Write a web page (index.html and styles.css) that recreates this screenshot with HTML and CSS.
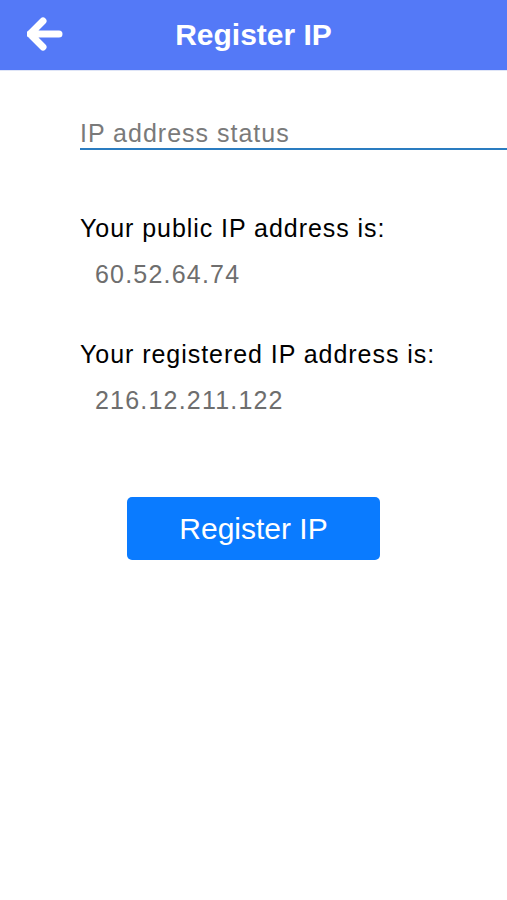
FILE: index.html
```html
<!DOCTYPE html>
<html>
<head>
<meta charset="utf-8">
<link rel="stylesheet" href="styles.css">
</head>
<body>
<header class="topbar">
  <button class="back" aria-label="Back">
    <svg width="36" height="34" viewBox="0 0 36 34"><path d="M16 4 L3 17 L16 30 M3 17 H32" fill="none" stroke="#fff" stroke-width="7" stroke-linecap="round" stroke-linejoin="round"/></svg>
  </button>
  <h1 class="title">Register IP</h1>
</header>
<main class="content">
  <div class="field">IP address status</div>
  <p class="label first">Your public IP address is:</p>
  <p class="value">60.52.64.74</p>
  <p class="label second">Your registered IP address is:</p>
  <p class="value">216.12.211.122</p>
  <div class="actions">
    <button class="register">Register IP</button>
  </div>
</main>
</body>
</html>
```
FILE: styles.css
```css
html, body {
  margin: 0;
  padding: 0;
  background: #fff;
  font-family: "Liberation Sans", Arial, sans-serif;
}
.topbar {
  position: relative;
  height: 70px;
  background: #5479f7;
  border-bottom: 1px solid #dfe5f7;
  display: flex;
  align-items: center;
  justify-content: center;
}
.back {
  position: absolute;
  left: 27px;
  top: 17px;
  width: 36px;
  height: 34px;
  padding: 0;
  border: 0;
  background: none;
  display: flex;
}
.title {
  margin: 0;
  color: #fff;
  font-size: 30px;
  font-weight: bold;
  line-height: 36px;
}
.content {
  display: flex;
  flex-direction: column;
}
.field {
  margin: 47px 0 0 80px;
  font-size: 25px;
  letter-spacing: 1px;
  line-height: 30px;
  color: #7a7a7a;
  border-bottom: 2px solid #2a7cc0;
}
.label {
  margin: 0 0 0 80px;
  font-size: 25px;
  letter-spacing: 0.95px;
  line-height: 30px;
  color: #000;
}
.label.first { margin-top: 63px; }
.label.second { margin-top: 50px; }
.value {
  margin: 16px 0 0 95px;
  font-size: 25px;
  letter-spacing: 1.2px;
  line-height: 30px;
  color: #6e6e6e;
}
.actions {
  display: flex;
  justify-content: center;
  margin-top: 82px;
}
.register {
  width: 253px;
  height: 63px;
  border: 0;
  border-radius: 5px;
  background: #0a7bff;
  color: #fff;
  font-family: "Liberation Sans", Arial, sans-serif;
  font-size: 30px;
  padding: 0;
}
```
